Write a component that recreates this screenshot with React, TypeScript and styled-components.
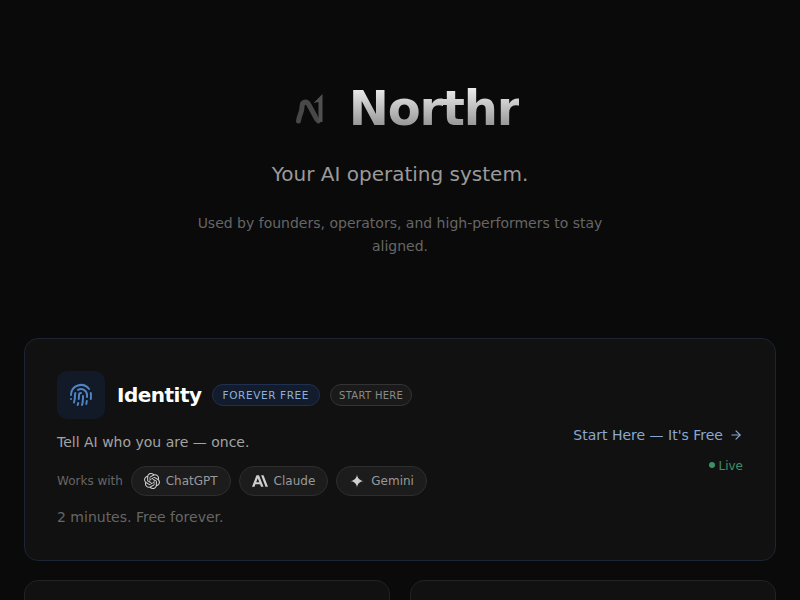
import styled, { createGlobalStyle } from "styled-components"
import { ArrowRight, Fingerprint } from "lucide-react"
import { SiAnthropic, SiGooglegemini, SiOpenai } from "react-icons/si"

const GlobalStyle = createGlobalStyle`
	html, body {
		margin: 0;
		height: 100%;
		overflow: hidden;
		background: #0a0a0a;
		font-family: "DejaVu Sans", sans-serif;
	}
`

const tools = [
	{ name: "ChatGPT", icon: <SiOpenai size={16} /> },
	{ name: "Claude", icon: <SiAnthropic size={16} /> },
	{ name: "Gemini", icon: <SiGooglegemini size={14} /> },
]

const NorthrMark = () => (
	<svg width="56" height="56" viewBox="0 0 56 56" fill="none">
		<path
			d="M17.5 41 C18 35 21 33 21 27 C21 21.5 25.5 20.5 28 25 L34 36 C35 38 35.5 40 37.5 41"
			stroke="#484848"
			strokeWidth="5"
			strokeLinecap="round"
			strokeLinejoin="round"
		/>
		<path d="M41.5 14 V42 H37.5 V22 L32.5 23 Z" fill="#505050" />
	</svg>
)

const App = () => {
	return (
		<Page>
			<GlobalStyle />
			<Hero>
				<Brand>
					<NorthrMark />
					<Title>Northr</Title>
				</Brand>
				<Tagline>Your AI operating system.</Tagline>
				<Description>Used by founders, operators, and high-performers to stay aligned.</Description>
			</Hero>
			<Grid>
				<FeatureCard>
					<CardMain>
						<CardHead>
							<IconBox>
								<Fingerprint size={24} strokeWidth={2} />
							</IconBox>
							<CardTitle>Identity</CardTitle>
							<Badge $tone="blue">FOREVER FREE</Badge>
							<Badge $tone="gray">START HERE</Badge>
						</CardHead>
						<Lead>Tell AI who you are — once.</Lead>
						<ToolRow>
							<ToolLabel>Works with</ToolLabel>
							{tools.map((tool) => (
								<ToolPill key={tool.name}>
									<ToolIcon>{tool.icon}</ToolIcon>
									{tool.name}
								</ToolPill>
							))}
						</ToolRow>
						<Note>2 minutes. Free forever.</Note>
					</CardMain>
					<CardSide>
						<StartLink href="#">
							Start Here — It's Free
							<ArrowRight size={14} />
						</StartLink>
						<Status>
							<Dot />
							Live
						</Status>
					</CardSide>
				</FeatureCard>
				<Card />
				<Card />
			</Grid>
		</Page>
	)
}

export default App

const Page = styled.main`
	box-sizing: border-box;
	padding: 0 24px;
`

const Hero = styled.header`
	display: flex;
	flex-direction: column;
	align-items: center;
	padding-top: 80px;
	margin-bottom: 80px;
	text-align: center;
`

const Brand = styled.div`
	display: flex;
	align-items: center;
	gap: 12px;
	margin-bottom: 24px;
`

const Title = styled.h1`
	margin: 0;
	font-size: 48px;
	line-height: 56px;
	font-weight: 700;
	letter-spacing: -1.2px;
	background: linear-gradient(180deg, #f2f2f2 10%, #8c8c8c 90%);
	-webkit-background-clip: text;
	background-clip: text;
	color: transparent;
`

const Tagline = styled.p`
	margin: 0 0 24px;
	font-size: 20px;
	line-height: 28px;
	color: #9a9a9a;
`

const Description = styled.p`
	margin: 0;
	max-width: 448px;
	font-size: 14px;
	line-height: 23px;
	color: #666666;
`

const Grid = styled.section`
	display: grid;
	grid-template-columns: 1fr 1fr;
	gap: 19.5px 20px;
`

const Card = styled.article`
	box-sizing: border-box;
	min-height: 200px;
	background: #111111;
	border: 1px solid #222222;
	border-radius: 14px;
`

const FeatureCard = styled(Card)`
	grid-column: 1 / -1;
	display: flex;
	justify-content: space-between;
	align-items: center;
	padding: 32px;
	border-color: #1c2533;
`

const CardMain = styled.div`
	display: flex;
	flex-direction: column;
`

const CardHead = styled.div`
	display: flex;
	align-items: center;
	gap: 10px;
	margin-bottom: 12px;
`

const IconBox = styled.div`
	display: flex;
	align-items: center;
	justify-content: center;
	width: 48px;
	height: 48px;
	margin-right: 2px;
	border-radius: 10px;
	background: #121a27;
	color: #4f83c4;
`

const CardTitle = styled.h2`
	margin: 0;
	font-size: 20px;
	line-height: 28px;
	font-weight: 700;
	letter-spacing: -0.5px;
	color: #ffffff;
`

const Badge = styled.span<{ $tone: "blue" | "gray" }>`
	box-sizing: border-box;
	display: inline-flex;
	align-items: center;
	height: 22px;
	padding: 0 ${(p) => (p.$tone === "blue" ? "10px" : "8px")};
	border-radius: 11px;
	font-size: ${(p) => (p.$tone === "blue" ? "10.5px" : "10px")};
	letter-spacing: ${(p) => (p.$tone === "blue" ? "0.6px" : "0.3px")};
	color: ${(p) => (p.$tone === "blue" ? "#8fb0d8" : "#8a8a8a")};
	background: ${(p) => (p.$tone === "blue" ? "#121c2c" : "#1a1a1a")};
	border: 1px solid ${(p) => (p.$tone === "blue" ? "#1f3050" : "#333333")};
`

const Lead = styled.p`
	margin: 0 0 12px;
	font-size: 14px;
	line-height: 22.75px;
	color: #a3a3a3;
`

const ToolRow = styled.div`
	display: flex;
	align-items: center;
	gap: 8px;
	margin-bottom: 11px;
`

const ToolLabel = styled.span`
	margin-right: -0.25px;
	font-size: 12px;
	color: #666666;
`

const ToolPill = styled.span`
	box-sizing: border-box;
	display: flex;
	align-items: center;
	gap: 6px;
	height: 30px;
	padding: 0 12px;
	border-radius: 15px;
	background: #1c1c1c;
	border: 1px solid #2e2e2e;
	font-size: 12px;
	color: #999999;
`

const ToolIcon = styled.span`
	display: flex;
	align-items: center;
	justify-content: center;
	width: 16px;
	height: 16px;
	color: #cfcfcf;
`

const Note = styled.p`
	margin: 0;
	font-size: 14px;
	line-height: 21px;
	color: #666666;
`

const CardSide = styled.div`
	display: flex;
	flex-direction: column;
	align-items: flex-end;
	gap: 12px;
	padding-top: 1px;
`

const StartLink = styled.a`
	display: flex;
	align-items: center;
	gap: 6px;
	font-size: 14px;
	line-height: 20px;
	color: #89a8d0;
	text-decoration: none;
`

const Status = styled.span`
	display: flex;
	align-items: center;
	gap: 3px;
	padding-top: 1px;
	font-size: 12px;
	line-height: 16px;
	color: #3d8f68;
`

const Dot = styled.span`
	width: 6px;
	height: 6px;
	margin-bottom: 2px;
	border-radius: 50%;
	background: #3d8f68;
`
